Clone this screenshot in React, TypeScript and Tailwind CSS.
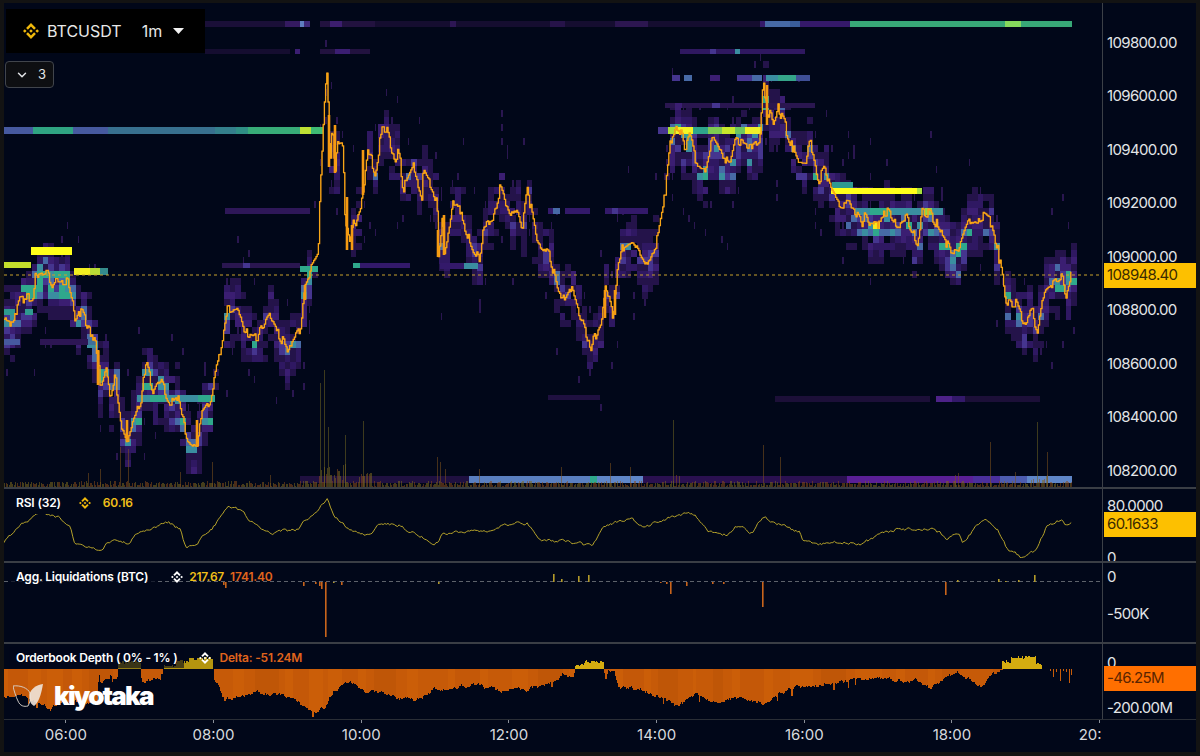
import { ChevronDown } from "lucide-react";
import { SiBinance } from "react-icons/si";

// seeded random so that every render draws the same chart
const makeRng = (seed: number) => () => {
  seed = (seed + 0x6d2b79f5) | 0;
  let t = Math.imul(seed ^ (seed >>> 15), 1 | seed);
  t = (t + Math.imul(t ^ (t >>> 7), 61 | t)) ^ t;
  return ((t ^ (t >>> 14)) >>> 0) / 4294967296;
};

type Pt = [number, number];

const interp = (pts: Pt[], x: number) => {
  if (x <= pts[0][0]) return pts[0][1];
  for (let i = 1; i < pts.length; i++) {
    if (x <= pts[i][0]) {
      const [x0, y0] = pts[i - 1];
      const [x1, y1] = pts[i];
      return y0 + ((y1 - y0) * (x - x0)) / (x1 - x0 || 1);
    }
  }
  return pts[pts.length - 1][1];
};

const pricePts: Pt[] = [
  [4, 320], [13, 323], [20, 300], [33, 297], [35, 277], [47, 272], [52, 283], [68, 283], [72, 300], [75, 325], [80, 310], [88, 327],
  [98, 353], [100, 387], [106, 367], [110, 397], [115, 375], [120, 420], [127, 440], [133, 420], [140, 403], [146, 363], [153, 390],
  [160, 382], [170, 403], [178, 395], [187, 440], [197, 447], [200, 417], [210, 403], [220, 350], [227, 310], [237, 307], [243, 330],
  [257, 337], [270, 317], [287, 350], [295, 335], [300, 327], [305, 282], [318, 257], [320, 187], [325, 93], [327, 75], [330, 167],
  [332, 127], [335, 173], [338, 138], [343, 150], [345, 220], [350, 247], [353, 223], [355, 230], [363, 193], [368, 150], [375, 172],
  [382, 128], [386, 128], [395, 167], [398, 142], [403, 188], [413, 165], [422, 197], [423, 173], [437, 200], [438, 257], [443, 213],
  [443.5, 255], [450, 223], [453, 202], [460, 213], [473, 250], [480, 260], [483, 223], [493, 217], [500, 188], [510, 217], [517, 207],
  [522, 230], [527, 188], [537, 243], [550, 257], [555, 280], [562, 302], [570, 285], [577, 307], [590, 347], [602, 323], [605, 283],
  [613, 317], [615, 288], [622, 247], [633, 240], [647, 267], [657, 240], [665, 193], [670, 143], [678, 128], [685, 147], [690, 132],
  [697, 167], [705, 167], [712, 135], [720, 153], [730, 163], [735, 140], [750, 147], [760, 137], [763, 80], [767, 110], [773, 122],
  [778, 107], [790, 140], [797, 160], [805, 160], [810, 143], [818, 180], [825, 168], [832, 192], [840, 205], [853, 207], [862, 223],
  [865, 210], [870, 223], [880, 225], [885, 210], [897, 225], [907, 217], [917, 245], [922, 210], [933, 217], [943, 237], [950, 250],
  [958, 252], [968, 223], [982, 215], [990, 220], [997, 247], [1002, 277], [1007, 303], [1015, 303], [1023, 322], [1032, 310],
  [1037, 333], [1043, 293], [1053, 283], [1062, 275], [1065, 297], [1071, 275],
];

// thick candle bodies on the fast moves
const wicks: [number, number, number][] = [
  [329, 115, 167], [335, 125, 173], [347, 197, 250], [352, 225, 250], [363, 150, 195], [438, 230, 257], [444, 215, 255], [127, 420, 441], [98, 350, 385],
  [197, 420, 447], [305, 285, 300], [605, 290, 318], [615, 290, 315], [767, 85, 125],
];

const rsiPts: Pt[] = [
  [4, 542], [20, 527], [38, 512], [48, 513], [70, 525], [74, 543], [100, 548], [113, 540], [128, 543], [143, 528], [168, 522], [180, 530],
  [187, 550], [197, 543], [213, 527], [227, 508], [237, 508], [263, 533], [297, 530], [307, 520], [327, 498], [333, 515], [347, 527],
  [365, 535], [383, 523], [400, 525], [420, 537], [438, 542], [443, 533], [477, 533], [500, 525], [527, 523], [540, 540], [563, 542],
  [592, 547], [605, 528], [630, 517], [645, 527], [683, 513], [695, 517], [710, 532], [728, 535], [735, 525], [752, 533], [763, 517],
  [777, 523], [800, 532], [803, 543], [818, 545], [833, 540], [860, 545], [883, 533], [900, 527], [907, 528], [933, 530], [947, 538],
  [960, 532], [962, 543], [985, 518], [998, 530], [1007, 550], [1023, 558], [1037, 550], [1047, 525], [1062, 520], [1065, 525], [1072, 523],
];

const depthPts: Pt[] = [
  [4, 697], [27, 698], [43, 707], [50, 710], [57, 703], [70, 702], [97, 702], [98, 671], [100, 680], [108, 680], [110, 671], [112, 678],
  [117, 678], [118, 669], [140, 669], [141, 680], [155, 678], [160, 677], [162, 669], [213, 669], [214, 678], [220, 690], [223, 700],
  [253, 693], [293, 697], [315, 713], [325, 707], [333, 693], [350, 680], [367, 690], [400, 697], [418, 698], [433, 690], [477, 683],
  [500, 692], [523, 690], [553, 683], [562, 672], [566, 672], [573, 677], [575, 669], [603, 669], [605, 680], [607, 672], [613, 672],
  [620, 687], [657, 693], [667, 700], [677, 708], [697, 695], [717, 702], [733, 697], [762, 703], [793, 690], [813, 687], [827, 682],
  [877, 680], [913, 680], [930, 687], [943, 680], [957, 672], [980, 685], [1001, 671], [1002, 669], [1072, 669],
];

const yellowZones: [number, number, number][] = [
  [118, 140, 661], [163, 175, 664], [175, 188, 660], [188, 212, 657], [575, 583, 664], [583, 603, 660], [1002, 1010, 660], [1010, 1035, 656], [1035, 1042, 662],
];

const HEAT = ["#24134a", "#2f1862", "#3b1e72", "#45358f", "#476aa6", "#3a8ea0", "#2fa88c"];

// level rows that stay in the book for a while
const strips: [number, number, number, number, string][] = [
  // top of chart
  [21, 6, 205, 285, "#1a0f38"], [21, 6, 285, 305, "#341a60"], [21, 6, 300, 304, "#5f7fc0"], [21, 6, 304, 310, "#3f2a7a"], [21, 6, 320, 375, "#22123f"], [21, 6, 330, 342, "#3c1e6e"],
  [21, 6, 375, 760, "#150d30"], [21, 6, 450, 456, "#2d1654"], [21, 6, 550, 558, "#2d1654"], [21, 6, 550, 565, "#261349"], [21, 6, 615, 640, "#2a1550"],
  [21, 6, 760, 850, "#35196a"], [21, 6, 616, 648, "#2c1650"], [21, 6, 765, 790, "#476aa6"], [21, 6, 790, 800, "#3a5d9a"],
  [21, 6, 850, 1072, "#38a877"], [21, 6, 1005, 1021, "#86d85c"],
  [49, 5, 205, 290, "#150d30"], [49, 5, 295, 300, "#3b1e72"], [49, 5, 320, 370, "#22123f"], [49, 5, 335, 350, "#3b1e72"],
  [49, 5, 680, 805, "#2f1860"], [49, 5, 710, 716, "#45358f"], [49, 5, 735, 740, "#3a8ea0"],
  [75, 6, 672, 680, "#45358f"], [75, 6, 684, 692, "#476aa6"], [75, 6, 710, 720, "#3b1e72"], [75, 6, 737, 752, "#45358f"], [75, 6, 752, 762, "#476aa6"], [75, 6, 766, 778, "#3a8ea0"], [75, 6, 778, 796, "#35a589"], [75, 6, 796, 810, "#3f4f96"],
  [103, 5, 665, 815, "#2a1650"], [103, 5, 675, 682, "#3b1e72"], [103, 5, 712, 720, "#45358f"],
  // long bar at 109450
  [127, 7, 4, 33, "#46599f"], [127, 7, 33, 73, "#2fa482"], [127, 7, 73, 108, "#46599f"], [127, 7, 108, 215, "#38708f"], [127, 7, 215, 236, "#347f8c"], [127, 7, 236, 248, "#2f8f85"], [127, 7, 248, 300, "#38ac78"], [127, 7, 300, 311, "#bee034"], [127, 7, 311, 323, "#3fbb74"],
  [127, 7, 658, 668, "#45358f"], [127, 7, 668, 676, "#a8e03a"], [127, 7, 676, 693, "#f4f425"], [127, 7, 693, 708, "#2fa48c"], [127, 7, 708, 722, "#7ecb52"], [127, 7, 722, 735, "#c8e82c"], [127, 7, 735, 745, "#6cc660"], [127, 7, 745, 762, "#f0f02a"],
  // around 109200
  [208, 6, 225, 310, "#2e1758"], [208, 6, 500, 515, "#33196a"], [208, 6, 548, 555, "#33196a"], [208, 6, 553, 560, "#476aa6"], [208, 6, 565, 590, "#33196a"], [208, 6, 605, 648, "#33196a"], [208, 6, 612, 618, "#45358f"],
  [188, 6, 831, 917, "#ffff1a"], [188, 6, 917, 922, "#a8e03a"], [182, 6, 832, 853, "#2f9a90"],
  [208, 7, 855, 900, "#3a8ea0"], [208, 7, 870, 890, "#2fa88c"], [208, 7, 900, 925, "#3a8ea0"], [208, 7, 925, 932, "#8fd64a"], [208, 7, 932, 943, "#3a8ea0"],
  [222, 7, 873, 880, "#f8e81a"],
  // left side yellow levels
  [247, 8, 31, 72, "#ffff1a"], [262, 6, 4, 31, "#c4de2c"], [268, 7, 74, 100, "#f2ee20"], [268, 7, 90, 100, "#b9dc35"], [268, 7, 100, 108, "#358c8c"],
  [263, 5, 222, 300, "#2a1650"], [263, 5, 243, 250, "#45358f"], [263, 5, 353, 360, "#2fa88c"], [263, 5, 360, 410, "#33196a"],
  [266, 6, 300, 318, "#2fa88c"], [263, 6, 440, 478, "#33196a"], [263, 6, 464, 478, "#3a8ea0"],
  [309, 6, 4, 15, "#2f9a90"], [309, 6, 25, 33, "#2f9a90"], [339, 6, 4, 20, "#46599f"], [339, 6, 40, 88, "#2d1654"], [339, 6, 88, 96, "#3f6f9a"],
  [395, 7, 137, 150, "#3a8ea0"], [395, 7, 150, 165, "#2fa88c"], [395, 7, 165, 198, "#3a8ea0"], [395, 7, 198, 215, "#2fa88c"],
  [395, 5, 548, 600, "#1f1040"], [396, 6, 775, 930, "#1c0f38"], [396, 6, 936, 952, "#4d2288"], [396, 6, 952, 965, "#33196a"], [396, 6, 965, 1040, "#1c0f38"],
  // bottom of chart
  [476, 7, 300, 469, "#1f1040"], [476, 7, 469, 590, "#5a7fc0"], [476, 7, 590, 597, "#2fa88c"], [476, 7, 597, 643, "#5f86c8"], [476, 7, 643, 847, "#2a1050"],
  [476, 7, 847, 973, "#5a1f96"], [476, 7, 973, 1000, "#4a2f9c"], [476, 7, 1000, 1027, "#4d5caf"], [476, 7, 1027, 1072, "#5f86c8"],
];

const heatCells = (() => {
  const rng = makeRng(7);
  const cells: { x: number; y: number; w: number; c: string }[] = [];
  const rowBoost: Record<number, number> = {};
  for (let y = 40; y < 470; y += 7) rowBoost[y] = 0.5 + rng() * 0.7;
  for (let x = 4; x < 1072; x += 5.5) {
    const py = interp(pricePts, x + 2);
    // steep moves leave the book empty around the price
    const climb = Math.abs(interp(pricePts, x + 8) - interp(pricePts, x - 4));
    const calm = climb > 60 ? 0.15 : 1;
    // the book is thicker in the quiet stretches
    const busy = x < 100 || (x > 125 && x < 225) || (x > 665 && x < 765) || x > 845 ? 1.25 : x > 320 && x < 640 ? 0.72 : 0.95;
    for (let y = 40; y < 470; y += 7) {
      const d = y - py;
      if (Math.abs(d) > 85) continue;
      const noise = rng();
      const v = Math.exp(-((d / 25) * (d / 25))) * (0.1 + noise * 0.8) * rowBoost[y] * calm * busy;
      if (v > 0.1) {
        const level = Math.min(6, Math.floor((v - 0.1) * 8.5));
        cells.push({ x, y, w: 5.5, c: HEAT[level] });
      } else if (rng() < 0.05) {
        cells.push({ x: x + 2, y, w: 1.5, c: "#2a1650" });
      }
    }
  }
  return cells;
})();

// the price holds for a few candles and then jumps, so the line comes out stepped
const pricePath = (() => {
  const rng = makeRng(21);
  let offset = 0;
  let hold = 0;
  let d = "";
  for (let x = 4; x < 1072; x += 1.2) {
    if (hold <= 0) {
      offset = (rng() - 0.5) * 11;
      hold = Math.floor(rng() * 4);
    }
    hold--;
    const y = interp(pricePts, x) + offset;
    d += d ? `H${x.toFixed(1)}V${y.toFixed(1)}` : `M${x} ${y.toFixed(1)}`;
  }
  return d;
})();

const linePath = (pts: Pt[], seed: number, amp: number) => {
  const rng = makeRng(seed);
  let noise = 0;
  let d = "";
  for (let x = 4; x < 1072; x += 1.6) {
    noise = noise * 0.7 + (rng() - 0.5) * amp;
    const y = interp(pts, x) + noise;
    d += `${d ? "L" : "M"}${x.toFixed(1)} ${y.toFixed(1)}`;
  }
  return d;
};

const volumeBars = (() => {
  const rng = makeRng(33);
  const spikes: Record<number, number> = {
    320: 104, 324: 117, 328: 60, 345: 52, 363: 66, 437: 30, 440: 25, 445: 18, 479: 18, 561: 20, 610: 24, 630: 20, 673: 67, 763: 42, 780: 30,
    955: 12, 958: 14, 990: 45, 1037: 65, 1047: 35, 1015: 15, 88: 14, 100: 18, 120: 40, 128: 38, 270: 12, 212: 25, 180: 15,
  };
  const bars: { x: number; h: number; c: string }[] = [];
  for (let x = 4; x < 1072; x += 1.6) {
    const near = x > 318 && x < 345 ? 22 : x > 355 && x < 372 ? 14 : x > 1030 && x < 1048 ? 12 : x > 670 && x < 680 ? 12 : 5;
    bars.push({ x, h: 1 + rng() * near, c: rng() > 0.5 ? "#7d6a1e" : "#8a4a18" });
  }
  Object.entries(spikes).forEach(([x, h]) => bars.push({ x: Number(x), h, c: h > 50 ? "#6f6520" : "#80521c" }));
  return bars;
})();

const depthCols = (() => {
  const rng = makeRng(55);
  const cols: { x: number; y: number; h: number; c: string }[] = [];
  const tones = ["#bf5607", "#c65a08", "#cb5e08", "#c45808"];
  let drift = 0;
  for (let x = 4; x < 1072; x += 1.2) {
    const zone = yellowZones.find((z) => x >= z[0] && x < z[1]);
    if (zone) {
      const top = zone[2] + rng() * 3;
      cols.push({ x, y: top, h: 669 - top, c: x < 160 ? "#8f7a14" : x < 212 ? "#b4950f" : "#d4ac10" });
      continue;
    }
    const y = interp(depthPts, x);
    drift = drift * 0.8 + (rng() - 0.5) * 3.4;
    if (y > 670) {
      const tone = tones[Math.floor((Math.sin(x / 9) + Math.sin(x / 23) + 2) * 0.99)];
      const spike = rng() > 0.985 ? 6 : 0;
      cols.push({ x, y: 669, h: y - 669 + drift + spike, c: tone });
    }
  }
  [[1050, 2], [1053, 8], [1056, 3], [1060, 12], [1063, 2], [1066, 3], [1069, 14], [1071, 6]].forEach(([x, h]) =>
    cols.push({ x, y: 669, h, c: "#c95c08" }),
  );
  return cols;
})();

const liqBars: [number, number, string][] = [
  [223, 3, "o"], [225, 6, "o"], [303, 4, "o"], [315, 2, "o"], [319, 4, "o"], [321, 7, "o"], [325, 55, "o"], [341, 3, "o"], [333, 1, "y"],
  [438, 2, "y"], [553, -8, "y"], [561, -3, "y"], [578, -6, "y"], [588, -7, "y"], [660, 1, "o"], [666, 2, "o"], [670, 12, "o"], [686, 4, "o"],
  [712, 2, "o"], [723, 2, "o"], [762, 25, "o"], [945, 13, "o"], [957, -2, "y"], [998, -3, "y"], [1005, -1, "y"], [1018, -2, "y"], [1034, -7, "y"],
];

const mainLabels = ["109800.00", "109600.00", "109400.00", "109200.00", "109000.00", "108800.00", "108600.00", "108400.00", "108200.00"];
const times = ["06:00", "08:00", "10:00", "12:00", "14:00", "16:00", "18:00", "20:00"];

function Badge({ value, top, className }: { value: string; top: string; className: string }) {
  return <div className={`absolute left-[1px] right-0 h-[24.5px] flex items-center pl-[3px] ${top} ${className}`}>{value}</div>;
}

function Separator() {
  return <div className="h-[2px] bg-[#3a3e45]" />;
}

function Logo() {
  return (
    <div className="absolute left-[9px] top-[39px] flex items-center gap-[9px]">
      <svg width="32" height="26" viewBox="13 684 32 26" fill="none">
        <path d="M13 687 C20 686 28 689 30 694 C31 698 30 704 28 707 C24 708 20 707 18 702 C16 698 14 692 13 687Z" stroke="#d9d5cf" strokeWidth="0.9" />
        <path d="M43 685 C36 686 31 690 29.500 695 C29 700 30 705 34 707 C38 704 41 697 43 685Z" fill="#efe6dc" fillOpacity="0.9" />
      </svg>
      <span className="text-white text-[26px] leading-none font-black tracking-[-1.8px]">kiyotaka</span>
    </div>
  );
}

export default function App() {
  return (
    <div className="w-[1200px] h-[756px] overflow-hidden bg-[#131313] pt-[3px] px-[4px] pb-[4px] font-[family-name:Inter,sans-serif] text-[15px] text-[#e3e5e8]">
      <div className="flex h-full flex-col bg-[#010719]">
        {/* main chart */}
        <div className="flex h-[484px]">
          <div className="relative w-[1098px] overflow-hidden">
            <svg width="1098" height="484" viewBox="4 3 1098 484" className="block">
              <g shapeRendering="crispEdges">
                {heatCells.map((c, i) => (
                  <rect key={i} x={c.x} y={c.y} width={c.w} height={7} fill={c.c} />
                ))}
                {strips.map(([y, h, x1, x2, c], i) => (
                  <rect key={i} x={x1} y={y} width={x2 - x1} height={h} fill={c} />
                ))}
                {volumeBars.map((b, i) => (
                  <rect key={i} x={b.x} y={487 - b.h} width={1.2} height={b.h} fill={b.c} fillOpacity={0.55} />
                ))}
              </g>
              <path d={pricePath} fill="none" stroke="#f5930f" strokeWidth="1.3" />
              <path d={pricePath} fill="none" stroke="#fbbf24" strokeWidth="0.5" />
              {wicks.map(([x, y1, y2], i) => (
                <line key={i} x1={x} x2={x} y1={y1} y2={y2} stroke="#f59a12" strokeWidth="2.6" />
              ))}
              <line x1="4" x2="1102" y1="275" y2="275" stroke="#c9a22c" strokeWidth="1" strokeDasharray="3 3" />
            </svg>
            <div className="absolute left-[2px] top-[6px] flex h-[44px] w-[199px] items-center bg-black pl-[17px] text-[16px] text-[#e8e8e8]">
              <SiBinance size={16} color="#f0b90b" />
              <span className="ml-[8px]">BTCUSDT</span>
              <span className="ml-[20px]">1m</span>
              <svg width="11" height="6" viewBox="0 0 11 6" className="ml-[11px]">
                <path d="M0 0H11L5.500 6Z" fill="#f2f2f2" />
              </svg>
            </div>
            <div className="absolute left-[1px] top-[58px] flex h-[27px] w-[49px] items-center gap-[9px] rounded-[4px] border border-[#41454c] bg-[#0e0f12] pl-[9px] text-[13px]">
              <ChevronDown size={14} strokeWidth={2.5} />
              <span>3</span>
            </div>
          </div>
          <div className="relative flex-1 border-l border-[#3c4047] pt-[13px] pl-[4px] tracking-[-0.65px]">
            {mainLabels.map((l) => (
              <div key={l} className="flex h-[53.500px] items-center">
                {l}
              </div>
            ))}
            <Badge value="108948.40" top="top-[260px]" className="bg-[#fdc000] text-[#3a2a00]" />
          </div>
        </div>
        <Separator />
        {/* RSI */}
        <div className="flex h-[72px]">
          <div className="relative w-[1098px] overflow-hidden">
            <svg width="1098" height="72" viewBox="4 489 1098 72" className="block">
              <path d={linePath(rsiPts, 3, 3.2)} fill="none" stroke="#b5a22a" strokeWidth="1" />
            </svg>
            <div className="absolute left-[5px] top-[3px] flex items-center text-[12px] font-semibold tracking-[-0.15px]">
              <div className="flex h-[22px] items-center bg-[#010719] px-[7px] text-white">RSI (32)</div>
              <SiBinance size={12} color="#f0b90b" className="ml-[11px]" />
              <span className="ml-[12px] text-[#f0bf18]">60.16</span>
            </div>
          </div>
          <div className="relative flex flex-1 flex-col gap-[34px] overflow-hidden border-l border-[#3c4047] pt-[8px] pl-[4px] leading-[18px] tracking-[-0.65px]">
            <div>80.0000</div>
            <div>0</div>
            <Badge value="60.1633" top="top-[23px]" className="bg-[#fdc000] text-[#3a2a00]" />
          </div>
        </div>
        <Separator />
        {/* liquidations */}
        <div className="flex h-[79px]">
          <div className="relative w-[1098px] overflow-hidden">
            <svg width="1098" height="79" viewBox="4 563 1098 79" className="block">
              <line x1="4" x2="1102" y1="581.500" y2="581.500" stroke="#5d626b" strokeWidth="1" strokeDasharray="4 3" />
              {liqBars.map(([x, h, t], i) => (
                <rect key={i} x={x} y={h > 0 ? 582 : 582 + h} width={1.6} height={Math.abs(h)} fill={t === "o" ? "#c8641c" : "#b39a2a"} />
              ))}
            </svg>
            <div className="absolute left-[5px] top-[3px] flex items-center text-[12px] font-semibold tracking-[-0.2px]">
              <div className="flex h-[22px] items-center bg-[#010719]/70 px-[7px] text-white">Agg. Liquidations (BTC)</div>
              <SiBinance size={12} color="#ffffff" className="ml-[16px]" />
              <span className="ml-[6px] text-[#f0bf18]">217.67</span>
              <span className="ml-[6px] text-[#e0641c]">1741.40</span>
            </div>
          </div>
          <div className="relative flex flex-1 flex-col gap-[19px] border-l border-[#3c4047] pt-[5px] pl-[4px] leading-[18px] tracking-[-0.65px]">
            <div>0</div>
            <div>-500K</div>
          </div>
        </div>
        <Separator />
        {/* orderbook depth */}
        <div className="flex h-[75px]">
          <div className="relative w-[1098px] overflow-hidden">
            <svg width="1098" height="75" viewBox="4 644 1098 75" className="block">
              <g shapeRendering="crispEdges">
                {depthCols.map((c, i) => (
                  <rect key={i} x={c.x} y={c.y} width={1.4} height={c.h} fill={c.c} />
                ))}
              </g>
            </svg>
            <div className="absolute left-[5px] top-[3px] flex items-center text-[12px] font-semibold tracking-[-0.2px]">
              <div className="flex h-[21px] items-center bg-[#010719]/60 px-[7px] text-white">Orderbook Depth ( 0% - 1% )</div>
              <SiBinance size={12} color="#ffffff" className="ml-[15px]" />
              <span className="ml-[8px] text-[#e0641c]">Delta: -51.24M</span>
            </div>
            <Logo />
          </div>
          <div className="relative flex flex-1 flex-col gap-[27px] border-l border-[#3c4047] pt-[10px] pl-[4px] leading-[18px] tracking-[-0.65px]">
            <div>0</div>
            <div>-200.00M</div>
            <Badge value="-46.25M" top="top-[22px]" className="bg-[#ff6f00] text-[#5a2400]" />
          </div>
        </div>
        <div className="h-px bg-[#2a2e36]" />
        {/* time axis */}
        <div className="w-[1098px] overflow-hidden">
          <div className="-ml-[12px] flex w-[1200px]">
            {times.map((t) => (
              <div key={t} className="flex w-[147.700px] flex-col items-center">
                <div className="h-[3px] w-px bg-[#8a8f99]" />
                <div className="mt-[3px] leading-[18px] text-[#d7dade]">{t}</div>
              </div>
            ))}
          </div>
        </div>
      </div>
    </div>
  );
}
